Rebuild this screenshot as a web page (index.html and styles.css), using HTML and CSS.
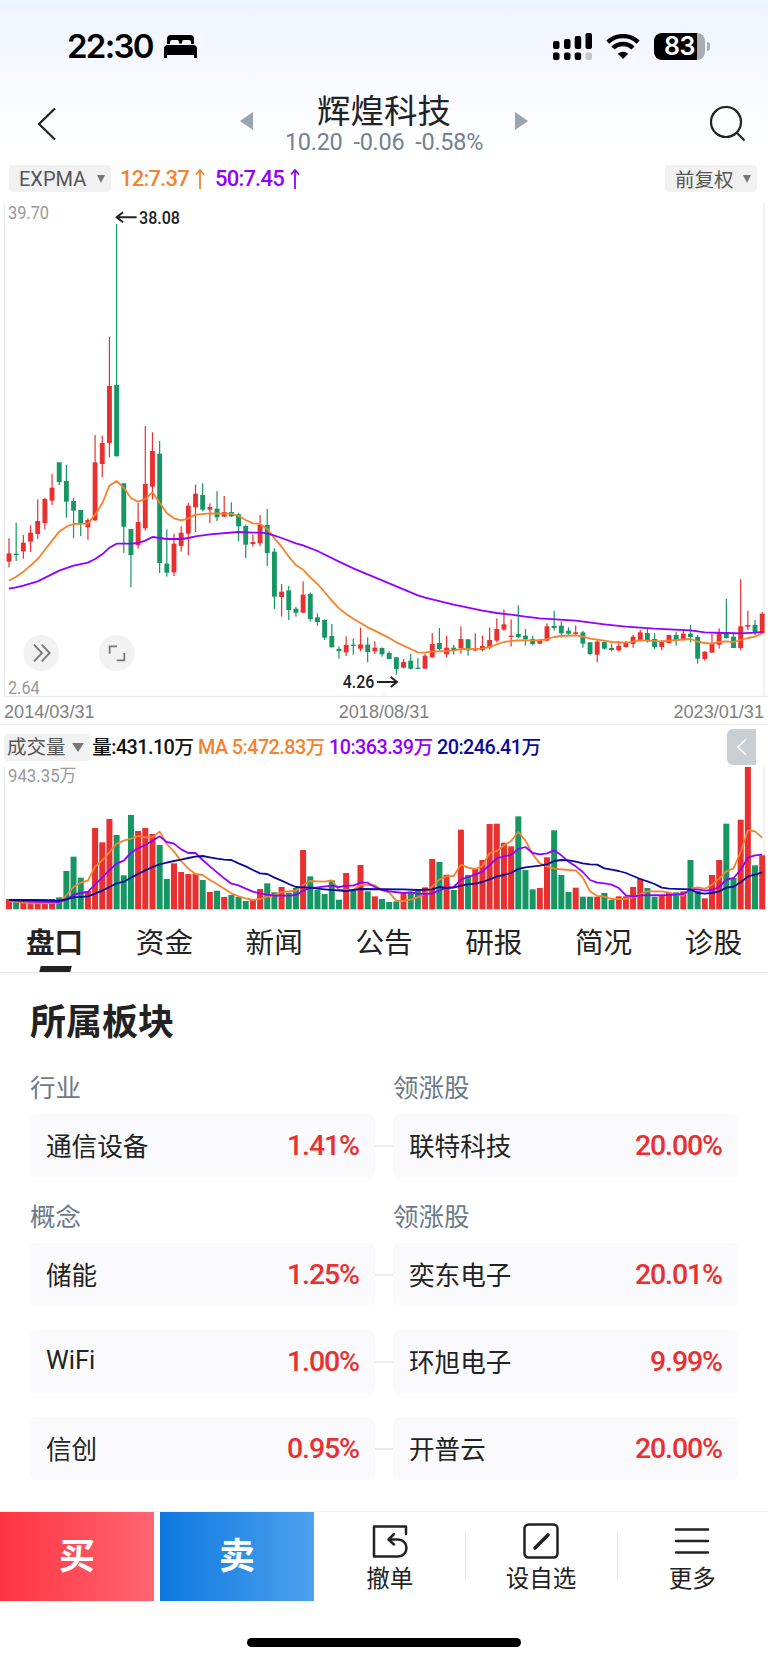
FILE: index.html
```html
<!DOCTYPE html>
<html lang="zh-CN">
  <head>
    <meta charset="UTF-8" />
    <meta name="viewport" content="width=device-width, initial-scale=1.0" />
    <title>辉煌科技</title>
    <link rel="stylesheet" href="styles.css">
  </head>
  <body>
    <div class="top">
      <div class="status-bar">
        <span class="time">22:30</span>
        <svg class="bed" viewBox="0 0 33 23">
          <path d="M3 9V4a4 4 0 0 1 4-4h19a4 4 0 0 1 4 4v5h-3V7a2 2 0 0 0-2-2h-5a2 2 0 0 0-2 2v1.500h-3V7a2 2 0 0 0-2-2H8a2 2 0 0 0-2 2v2z" />
          <path d="M4 10h25a4 4 0 0 1 4 4v9h-3v-3H3v3H0v-9a4 4 0 0 1 4-4z" />
        </svg>
        <svg class="signal" viewBox="0 0 39 27">
          <rect x="0" y="8" width="6.500" height="8" rx="2" />
          <rect x="11" y="6" width="6.500" height="10" rx="2" />
          <rect x="21.700" y="3" width="6.500" height="13" rx="2" />
          <rect x="32.500" y="0" width="6.500" height="16" rx="2" />
          <rect x="0" y="19.500" width="6.500" height="7.500" rx="2" />
          <rect x="11" y="19.500" width="6.500" height="7.500" rx="2" />
          <rect x="21.700" y="19.500" width="6.500" height="7.500" rx="2" />
          <rect x="32.500" y="19.500" width="6.500" height="7.500" rx="2" fill="#c3c6cb" />
        </svg>
        <svg class="wifi" viewBox="0 0 34 25">
          <path d="M1.800 8.200a22 22 0 0 1 30.400 0M7 14a14.500 14.500 0 0 1 20 0" fill="none" stroke="#000" stroke-width="4.400" />
          <path d="M17 25l-5.200-5.200a7.500 7.500 0 0 1 10.400 0z" />
        </svg>
        <div class="battery"><span>83</span></div>
      </div>
      <div class="nav">
        <svg class="back" viewBox="0 0 20 34"><path d="M18 1.500L2 17l16 15.500" /></svg>
        <div class="nav-center">
          <i class="prev"></i>
          <div class="stock">
            <h1>辉煌科技</h1>
            <p><span>10.20</span><span>-0.06</span><span>-0.58%</span></p>
          </div>
          <i class="next"></i>
        </div>
        <svg class="search" viewBox="0 0 36 36"><circle cx="16" cy="16" r="15" /><path d="M26.500 26.500l8 8" /></svg>
      </div>
    </div>

    <div class="indicator">
      <span class="select">EXPMA<i></i></span>
      <span class="ma12">12:7.37<svg viewBox="0 0 10 20"><path d="M5 20V1M1 5.500L5 1l4 4.500" /></svg></span>
      <span class="ma50">50:7.45<svg viewBox="0 0 10 20"><path d="M5 20V1M1 5.500L5 1l4 4.500" /></svg></span>
      <span class="select right">前复权<i></i></span>
    </div>

    <svg id="kline" class="kline" viewBox="0 18 2304 1512">
      <path class="frame" d="M13 38V1519H2304M2292 38V1519" />
      <path class="frame" d="M1152 1510v6M1152 1522v6" />
      <g class="candles"></g>
      <g class="lines"></g>
      <text class="scale" x="24" y="86" textLength="123" lengthAdjust="spacingAndGlyphs">39.70</text>
      <text class="scale" x="24" y="1512" textLength="95" lengthAdjust="spacingAndGlyphs">2.64</text>
      <text class="mark" x="417" y="102" textLength="123" lengthAdjust="spacingAndGlyphs">38.08</text>
      <path class="mark-arrow" d="M410 82H350M369 67L350 82l19 15" />
      <text class="mark" x="1028" y="1495" textLength="95" lengthAdjust="spacingAndGlyphs">4.26</text>
      <path class="mark-arrow" d="M1131 1476h60M1172 1461l19 15l-19 15" />
      <g class="tool">
        <circle cx="124" cy="1389" r="54" />
        <path d="M102 1364l24 25l-24 25M125 1364l24 25l-24 25" />
        <circle cx="350" cy="1389" r="54" />
        <path d="M329 1391v-22h22M350 1411h23v-22" />
      </g>
    </svg>
    <div class="dates"><span>2014/03/31</span><span>2018/08/31</span><span>2023/01/31</span></div>

    <div class="vol-head">
      <span class="select">成交量<i></i></span>
      <span class="v">量:431.10万</span>
      <span class="v5">MA 5:472.83万</span>
      <span class="v10">10:363.39万</span>
      <span class="v20">20:246.41万</span>
      <div class="side-tab"><svg viewBox="0 0 10 18"><path d="M9 1L1 9l8 8" /></svg></div>
    </div>
    <svg id="volume" class="volume" viewBox="0 111 2304 447">
      <path class="frame" d="M13 124V553M2292 124V553" />
      <g class="bars"></g>
      <g class="lines"></g>
      <text class="scale" x="24" y="171" textLength="205" lengthAdjust="spacingAndGlyphs">943.35万</text>
    </svg>

    <div class="tabs">
      <span class="active">盘口</span>
      <span>资金</span>
      <span>新闻</span>
      <span>公告</span>
      <span>研报</span>
      <span>简况</span>
      <span>诊股</span>
    </div>

    <div class="plates">
      <h2>所属板块</h2>
      <div class="labels"><span>行业</span><span>领涨股</span></div>
      <div class="row">
        <div class="card"><span>通信设备</span><b>1.41%</b></div>
        <div class="card"><span>联特科技</span><b>20.00%</b></div>
      </div>
      <div class="labels second"><span>概念</span><span>领涨股</span></div>
      <div class="row">
        <div class="card"><span>储能</span><b>1.25%</b></div>
        <div class="card"><span>奕东电子</span><b>20.01%</b></div>
      </div>
      <div class="row">
        <div class="card"><span>WiFi</span><b>1.00%</b></div>
        <div class="card"><span>环旭电子</span><b>9.99%</b></div>
      </div>
      <div class="row">
        <div class="card"><span>信创</span><b>0.95%</b></div>
        <div class="card"><span>开普云</span><b>20.00%</b></div>
      </div>
    </div>

    <div class="bottom">
      <div class="buy">买</div>
      <div class="sell">卖</div>
      <div class="action">
        <svg viewBox="0 0 36 36"><path d="M34 11V3.500H2V33.500H26a8 8 0 0 0 0-17H17M22 11L16.500 16.500L22 21.500" /></svg>
        <span>撤单</span>
      </div>
      <div class="action">
        <svg viewBox="0 0 36 36"><rect x="1.500" y="1.500" width="33" height="33" rx="4" /><path d="M12 25L25 12" stroke-width="3.600" /></svg>
        <span>设自选</span>
      </div>
      <div class="action">
        <svg viewBox="0 0 36 36"><path d="M2 6.500h32M2 18h32M2 29.500h32" /></svg>
        <span>更多</span>
      </div>
    </div>
    <div class="home"></div>

    <script src="chart.js"></script>
  </body>
</html>
```
FILE: styles.css
```css
* {
  box-sizing: border-box;
}
body {
  margin: 0;
  width: 768px;
  height: 1662px;
  overflow: hidden;
  background: #fff;
  color: #222;
  font-family: Roboto, "Noto Sans CJK SC", sans-serif;
}
h1,
h2,
p {
  margin: 0;
  font-weight: 400;
}

/* status bar + title */
.top {
  height: 160px;
  background: linear-gradient(#eef4ff 0, #f2f6ff 35px, #fff 155px);
}
.status-bar {
  display: flex;
  align-items: center;
  height: 92px;
  padding: 0 63px 0 67px;
}
.time {
  width: 97px;
  font: 600 33px/1 Inter, sans-serif;
  letter-spacing: -1.7px;
  color: #000;
}
.bed {
  width: 33px;
  height: 23px;
}
.signal {
  width: 39px;
  height: 27px;
  margin-left: auto;
}
.wifi {
  width: 34px;
  height: 25px;
  margin: 0 14px;
}
.battery {
  position: relative;
  width: 51px;
  height: 27px;
  border-radius: 8px;
  background: linear-gradient(90deg, #000 43px, #a9adb3 43px);
  color: #fff;
  font: 600 25px/27px Inter, sans-serif;
  text-align: center;
  letter-spacing: -0.5px;
}
.battery::after {
  content: "";
  position: absolute;
  right: -5px;
  top: 9px;
  width: 3px;
  height: 9px;
  border-radius: 0 4px 4px 0;
  background: #a9adb3;
}
.nav {
  display: flex;
  align-items: center;
  justify-content: space-between;
  height: 64px;
  padding: 0 22px 0 37px;
}
.back {
  width: 20px;
  height: 34px;
}
.search {
  width: 36px;
  height: 36px;
}
.back path,
.search * {
  fill: none;
  stroke: #222;
  stroke-width: 2.2;
}
.nav-center {
  display: flex;
  align-items: center;
  justify-content: space-between;
  width: 288px;
  margin-left: 1px;
}
.prev,
.next {
  border: solid transparent;
  border-width: 9px 0;
  margin-bottom: 7px;
}
.prev {
  border-right: 13px solid #9aa3ae;
}
.next {
  border-left: 13px solid #9aa3ae;
}
.stock {
  text-align: center;
}
.stock h1 {
  padding-top: 1px;
  font-size: 33.5px;
  line-height: 36px;
}
.stock p {
  display: flex;
  gap: 11px;
  font-size: 23.5px;
  line-height: 25px;
  letter-spacing: -0.3px;
  color: #74828f;
}

/* indicator line */
.indicator {
  display: flex;
  align-items: center;
  height: 36px;
  padding: 1px 11px 0 9px;
  font-size: 22px;
  font-weight: 500;
  letter-spacing: -0.8px;
}
.select {
  display: flex;
  align-items: center;
  justify-content: space-between;
  width: 102px;
  height: 27px;
  padding: 0 6px 0 10px;
  border-radius: 4px;
  background: #f1f1f1;
  color: #555;
  font-size: 20px;
  font-weight: 400;
  letter-spacing: 0;
}
.select i {
  border: solid transparent;
  border-width: 8px 4.5px 0;
  border-top-color: #777;
}
.select.right {
  width: 92px;
  margin-left: auto;
  font-size: 19.5px;
}
.ma12,
.ma50 {
  display: flex;
  align-items: center;
  justify-content: space-between;
  width: 85px;
}
.ma12 {
  margin: 0 10px 0 9px;
  color: #f5822e;
}
.ma50 {
  color: #9400ff;
}
.ma12 svg,
.ma50 svg {
  flex: none;
  width: 10px;
  height: 20px;
  fill: none;
  stroke: currentColor;
  stroke-width: 1.8;
}

/* charts, 3 units to a pixel */
.kline,
.volume {
  display: block;
  width: 768px;
}
.kline {
  height: 504px;
}
.volume {
  height: 149px;
}
.frame {
  fill: none;
  stroke: #ededed;
  stroke-width: 4;
}
.up {
  fill: #e93030;
}
.down {
  fill: #159663;
}
.lines path {
  fill: none;
  stroke-width: 5.4;
  stroke-linejoin: round;
}
.scale,
.mark {
  font-size: 54px;
  fill: #999;
}
.mark {
  font-weight: 500;
  fill: #222;
}
.mark-arrow {
  fill: none;
  stroke: #222;
  stroke-width: 6;
}
.tool circle {
  fill: #f2f2f2;
}
.tool path {
  fill: none;
  stroke: #777;
  stroke-width: 5.5;
}
.dates {
  display: flex;
  justify-content: space-between;
  height: 25px;
  padding: 0 4px;
  border-bottom: 1px solid #f1f1f1;
  font: 18.1px/24px "Liberation Sans", sans-serif;
  color: #808080;
}

/* volume header */
.vol-head {
  position: relative;
  display: flex;
  align-items: center;
  height: 37px;
  padding: 8px 0 0 4px;
  font-size: 19.8px;
  font-weight: 500;
  letter-spacing: -0.55px;
  line-height: 27px;
  white-space: nowrap;
}
.vol-head .select {
  width: 86px;
  padding-left: 3px;
  font-size: 19.5px;
}
.vol-head .select i {
  border-width: 9px 6px 0;
}
.v {
  width: 106px;
  margin-left: 2px;
  color: #111;
}
.v5 {
  width: 131px;
  color: #f5822e;
}
.v10 {
  width: 108px;
  color: #9400ff;
}
.v20 {
  color: #0a0a9c;
}
.side-tab {
  position: absolute;
  left: 727px;
  top: 4px;
  display: flex;
  align-items: center;
  justify-content: center;
  width: 29px;
  height: 36px;
  border-radius: 6px 0 0 6px;
  background: #c9ced2;
}
.side-tab svg {
  width: 10px;
  height: 18px;
  fill: none;
  stroke: #fff;
  stroke-width: 1.6;
}

/* tabs */
.tabs {
  display: flex;
  justify-content: space-between;
  height: 62px;
  padding: 0 26px;
  border-bottom: 1px solid #e8e8e8;
  font-size: 28.6px;
  line-height: 64px;
}
.tabs span {
  position: relative;
  height: 61px;
}
.tabs .active {
  font-weight: 700;
}
.tabs .active::after {
  content: "";
  position: absolute;
  left: 14px;
  bottom: 0;
  width: 31px;
  height: 6px;
  background: #222;
  transform: skewX(-14deg);
}

/* plates */
.plates {
  height: 538px;
  padding: 28px 30px 0;
}
.plates h2 {
  font-size: 36px;
  font-weight: 700;
  line-height: 44px;
}
.labels,
.row {
  display: grid;
  grid-template-columns: 345px 345px;
  gap: 18px;
}
.labels {
  margin-top: 25px;
  padding-bottom: 7px;
  font-size: 25.5px;
  line-height: 37px;
  color: #6b7a88;
}
.labels.second {
  margin-top: -2px;
}
.row {
  margin-bottom: 24px;
  background: linear-gradient(#ececf0, #ececf0) center / 18px 2px no-repeat;
}
.card {
  display: flex;
  align-items: center;
  justify-content: space-between;
  height: 63px;
  padding: 0 16px;
  border-radius: 6px;
  background: #fafafc;
  font-size: 25.6px;
}
.card span {
  padding-bottom: 3px;
}
.card b {
  font-size: 28.5px;
  font-weight: 500;
  letter-spacing: -1.1px;
  color: #e93030;
}

/* bottom bar */
.bottom {
  display: flex;
  height: 90px;
  border-top: 1px solid #f1f1f1;
}
.buy,
.sell {
  width: 154px;
  color: #fff;
  font-size: 36px;
  font-weight: 700;
  line-height: 91px;
  text-align: center;
}
.buy {
  margin-right: 6px;
  background: linear-gradient(90deg, #ff3440, #ff6672);
}
.sell {
  background: linear-gradient(90deg, #0c78de, #4da1ef);
}
.action {
  position: relative;
  flex: 1;
  padding-top: 11px;
  text-align: center;
  font-size: 23.5px;
  line-height: 36px;
}
.action + .action::before {
  content: "";
  position: absolute;
  left: 0;
  top: 20px;
  width: 1px;
  height: 47px;
  background: #e6e6e6;
}
.action svg {
  display: block;
  width: 36px;
  height: 36px;
  margin: 0 auto 2px;
  fill: none;
  stroke: #222;
  stroke-width: 2.5;
  stroke-linecap: round;
  stroke-linejoin: round;
}
.home {
  width: 274px;
  height: 9px;
  margin: 37px 0 0 247px;
  border-radius: 5px;
  background: #000;
}
```
FILE: chart.js
```js
const X0 = 27;
const STEP = 21.52;

// [offset, "high,top,bottom,low ..."], r = up month, g = down month
const candles = [
  [690, `r355,400,425,442 g308,401,405,423 r345,368,394,416 r316,338,365,396 r238,303,342,357
    r234,237,309,328 r162,203,242,255 g127,127,186,195 g135,183,245,293 g234,243,272,355
    g270,270,312,348 r295,300,322,359 r45,127,301,303 r47,69,132,172 r-249,-102,69,112
    g-588,-105,109,109 g190,190,320,399 g327,327,405,502 r248,306,376,386 r18,192,325,332
    r37,93,200,238 g63,101,429,459 g328,431,458,470 r341,371,457,468 r319,338,378,395
    r249,257,341,406 r194,221,262,336 g190,225,269,274 r250,261,269,309 g213,266,292,303
    r228,276,290,290 g247,276,289,291 g278,283,319,363 g314,318,374,414 r344,366,372,380`],
  [810, `r165,195,250,258 g147,195,279,318 g265,275,410,447 r372,395,411,470 g378,391,450,480
    g441,446,458,470 r364,404,458,460 g397,402,477,485 g460,472,486,497 g478,480,533,540
    g492,528,562,562 g559,567,573,596 r529,555,577,588 g536,554,558,584 r503,553,566,574
    g532,554,576,607 r544,563,574,582 g562,564,583,590 g574,579,597,598 g591,592,627,644
    r597,606,623,625 g581,602,626,629 g594,623,627,627 r582,587,626,626 r519,552,592,594
    g504,549,567,571 r528,563,583,592 g555,563,570,584 r499,537,564,581 g537,538,571,587
    r520,568,572,572 r527,558,570,574 r503,540,563,568 r475,507,542,547 r449,493,509,512`],
  [1110, `r178,227,231,260 g136,222,231,235 g207,227,238,257 g228,237,252,256 r238,239,251,253
    r190,199,242,244 g152,198,204,212 g185,197,220,233 g202,212,221,224 r196,217,222,225
    g213,217,251,263 g246,247,282,286 r240,245,284,307 g244,246,266,269 g251,264,270,274
    r243,257,271,274 r243,249,261,263 r225,230,252,263 r210,217,241,243 g206,219,242,248
    g219,237,261,267 r240,245,261,271 r224,225,249,251 g216,225,241,257 r210,221,239,241
    g195,221,231,247 g225,231,296,311 r274,275,297,302 r221,251,278,278 r205,217,254,266
    g116,217,234,236 g215,230,264,264 r58,199,264,271 r152,195,200,211 g180,195,218,226
    r156,161,220,221`],
];

const volumes = [
  522, 525, 532, 532, 524, 523, 522, 517, 438, 395, 458, 498, 309, 352, 282, 330, 451, 270,
  318, 309, 327, 360, 462, 415, 441, 447, 447, 465, 501, 497, 516, 510, 516, 528, 525, 492,
  475, 502, 486, 503, 489, 375, 454, 495, 507, 466, 524, 444, 497, 420, 499, 514, 522, 531,
  529, 505, 500, 497, 487, 402, 411, 449, 495, 314, 450, 432, 405, 297, 296, 353, 364, 274,
  435, 493, 489, 397, 316, 450, 501, 488, 515, 515, 515, 504, 525, 514, 514, 486, 461, 489,
  515, 511, 504, 502, 499, 405, 498, 520, 450, 405, 296, 459, 284, 126, 421, 391,
];

// lines: [offset, "month:y ..."]
const ema12 = [
  [690, `0:482 1:470 2:455 3:437 4:417 5:390 6:362 7:335 8:320 9:312 11:311 12:284 13:250 14:197
    15:183 16:203 17:234 18:245 19:237 20:217 21:248 22:279 23:295 24:301 25:295 26:284 28:280
    31:281 32:288 33:300`],
  [810, `34:190 35:192 36:206 37:235 38:260 39:290 40:315 41:329 42:352 43:372 44:396 45:422 46:445
    47:462 48:476 49:489 50:502 51:512 52:523 53:534 54:547 55:557 56:567 57:577 58:578 59:575
    61:573 62:571 63:567 66:566 67:561 68:553 69:546`],
  [1110, `70:243 71:241 74:241 75:237 76:231 77:228 79:226 80:230 81:236 83:242 84:246 86:248
    87:245 88:241 91:244 93:240 95:237 96:245 97:249 98:251 99:246 100:244 101:246 102:240
    103:234 104:230 105:220`],
];
const ema50 = [
  [690, `0:506 1:502 2:497 4:484 7:452 9:437 11:428 12:417 13:403 14:383 15:371 17:371 18:369
    19:362 20:351 22:357 24:357 25:354 26:349 28:343 32:336`],
  [810, `34:218 35:218 36:220 37:227 38:234 40:250 41:256 43:273 46:305 48:325 51:352 54:379
    57:406 58:413 62:434 66:452 68:459`],
  [1110, `70:164 72:170 74:175 79:182 83:193 86:200 90:206 95:211 97:217 100:219 102:220
    104:218 105:216`],
];
const vol5 = [
  [0, `0:528 2:533 3:535 5:535 7:533 8:510 9:486 10:473 11:467 12:425 13:406 14:382 15:356 16:347
    17:341 18:333 19:337 20:337 21:320 22:357 23:380 24:408 25:431 26:447 27:450 28:465 29:477
    30:491 31:505 32:514 33:520 34:525 35:522 36:515 37:510 38:501 40:497 41:480 42:468 43:469
    44:470 45:466 46:495 48:495 49:479 51:481 52:495 53:503 54:527 55:528 56:524 57:517 58:507
    59:484 60:463 61:454 62:453 63:419 64:428 65:432 66:423 67:384 68:378 69:361 70:348 71:321
    72:347 73:388 74:415 75:424 76:431 78:435 79:436 80:458 81:499 82:513 83:515 84:522 86:522
    87:517 88:507 89:499 91:499 92:503 93:508 94:512 95:491 96:487 97:491 98:479 99:461 100:439
    101:430 102:381 103:316 104:319 105:338`],
];
const vol10 = [
  [0, `0:526 3:530 7:531 8:524 9:509 10:504 11:501 12:478 13:458 14:435 15:416 16:407 17:383
    18:370 19:360 20:347 21:334 22:351 23:356 24:373 25:384 26:384 27:405 28:424 29:442 30:460
    31:476 32:481 33:491 34:500 35:505 36:509 37:512 39:512 40:510 41:497 42:489 43:487 45:482
    46:486 47:482 48:482 49:473 50:473 51:486 52:495 53:499 55:504 56:502 57:506 58:507 59:505
    60:496 61:488 62:486 63:464 64:456 65:449 66:440 67:420 68:400 69:394 70:390 71:372 72:366
    73:384 74:388 75:385 76:376 77:391 78:410 79:424 80:441 81:465 82:473 83:475 84:479 85:489
    86:511 87:515 88:511 92:510 94:507 95:494 96:493 97:497 98:495 99:486 100:464 101:459
    102:435 103:398 104:391 105:389`],
];
const vol20 = [
  [0, `0:525 4:525 7:527 8:523 9:517 11:514 12:506 13:497 14:486 15:475 16:470 17:458 18:447
    19:436 20:426 21:418 22:413 23:408 24:404 25:399 26:395 27:393 28:397 29:401 30:404 31:405
    32:415 33:424 34:435 35:445 36:447 37:458 38:467 39:477 40:486 42:488 43:491 44:493 47:498
    49:492 55:493 57:495 59:493 60:486 61:489 62:488 63:482 64:478 65:476 66:471 67:463 68:454
    69:450 70:444 71:432 72:427 74:422 75:418 76:408 77:405 78:406 79:410 80:415 81:418 82:419
    83:430 84:434 85:438 86:444 87:453 88:462 89:469 90:477 91:488 92:491 95:493 96:504 97:506
    98:504 99:499 100:488 101:485 102:472 103:454 104:449 105:442`],
];

function xOf(i) {
  return X0 + STEP * i;
}

function rect(cls, x, y, w, h) {
  return `<rect class="${cls}" x="${x}" y="${y}" width="${w}" height="${h}" />`;
}

function line(parts, color) {
  const points = [];
  parts.forEach(([offset, text]) => {
    text.trim().split(/\s+/).forEach((p) => {
      const [i, y] = p.split(":").map(Number);
      points.push(`${xOf(i).toFixed(1)} ${y + offset}`);
    });
  });
  return `<path d="M${points.join("L")}" stroke="${color}" />`;
}

const kline = document.getElementById("kline");
const volume = document.getElementById("volume");
const classes = [];
let html = "";

candles.forEach(([offset, text]) => {
  text.trim().split(/\s+/).forEach((c) => {
    const cls = c[0] === "r" ? "up" : "down";
    const [high, top, bottom, low] = c.slice(1).split(",").map((n) => Number(n) + offset);
    const x = xOf(classes.length);
    html += rect(cls, x - 1.8, high, 3.6, low - high);
    html += rect(cls, x - 7.3, top, 14.6, bottom - top);
    classes.push(cls);
  });
});
kline.querySelector(".candles").innerHTML = html;
kline.querySelector(".lines").innerHTML = line(ema12, "#f5822e") + line(ema50, "#9400ff");

volume.querySelector(".bars").innerHTML = volumes
  .map((y, i) => rect(classes[i], xOf(i) - 9, y, 18, 553 - y))
  .join("");
volume.querySelector(".lines").innerHTML =
  line(vol5, "#f5822e") + line(vol10, "#9400ff") + line(vol20, "#0a0a9c");
```
